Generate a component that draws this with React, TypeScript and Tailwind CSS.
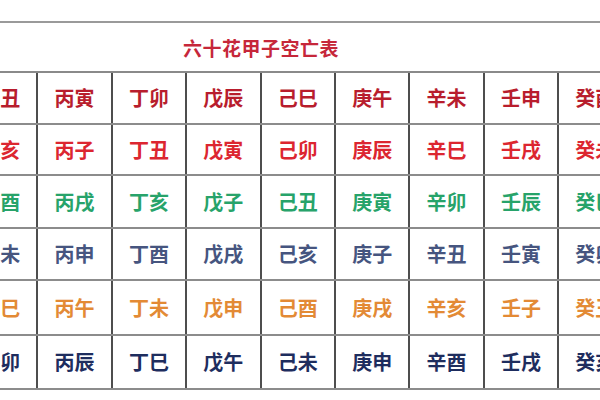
const rows: { color: string; cells: string[] }[] = [
  { color: "text-[#b81d2d]", cells: ["乙丑", "丙寅", "丁卯", "戊辰", "己巳", "庚午", "辛未", "壬申", "癸酉"] },
  { color: "text-[#dc2630]", cells: ["乙亥", "丙子", "丁丑", "戊寅", "己卯", "庚辰", "辛巳", "壬戌", "癸未"] },
  { color: "text-[#27a36a]", cells: ["乙酉", "丙戌", "丁亥", "戊子", "己丑", "庚寅", "辛卯", "壬辰", "癸巳"] },
  { color: "text-[#46557f]", cells: ["乙未", "丙申", "丁酉", "戊戌", "己亥", "庚子", "辛丑", "壬寅", "癸卯"] },
  { color: "text-[#e38a35]", cells: ["乙巳", "丙午", "丁未", "戊申", "己酉", "庚戌", "辛亥", "壬子", "癸丑"] },
  { color: "text-[#1e2d5e]", cells: ["乙卯", "丙辰", "丁巳", "戊午", "己未", "庚申", "辛酉", "壬戌", "癸亥"] },
];

const heights = ["h-[52px]", "h-[51px]", "h-[53px]", "h-[52px]", "h-[55px]", "h-[54px]"];

export default function App() {
  return (
    <div
      className="w-[600px] h-[400px] bg-white overflow-hidden pt-[21px]"
      style={{ fontFamily: '"Noto Sans CJK SC", "Noto Sans", sans-serif' }}
    >
      <div className="ml-[-36px] w-[670px]">
        {/* title row */}
        <div className="h-[52px] border-t-2 border-b-2 border-t-[#9a9a9a] border-b-[#8a8a8a] flex items-center pl-[219px]">
          <span className="text-[19px] font-semibold text-[#c6273a] tracking-[0.5px] leading-none">
            六十花甲子空亡表
          </span>
        </div>
        {rows.map((row, i) => (
          <div
            key={i}
            className={`grid grid-cols-[repeat(9,74.4px)] border-b-2 border-[#8c8c8c] ${heights[i]}`}
          >
            {row.cells.map((c, j) => (
              <div
                key={j}
                className={`flex items-center justify-center border-r-2 border-[#4e4e4e] text-[20px] font-semibold leading-none ${row.color}`}
              >
                {c}
              </div>
            ))}
          </div>
        ))}
      </div>
    </div>
  );
}
